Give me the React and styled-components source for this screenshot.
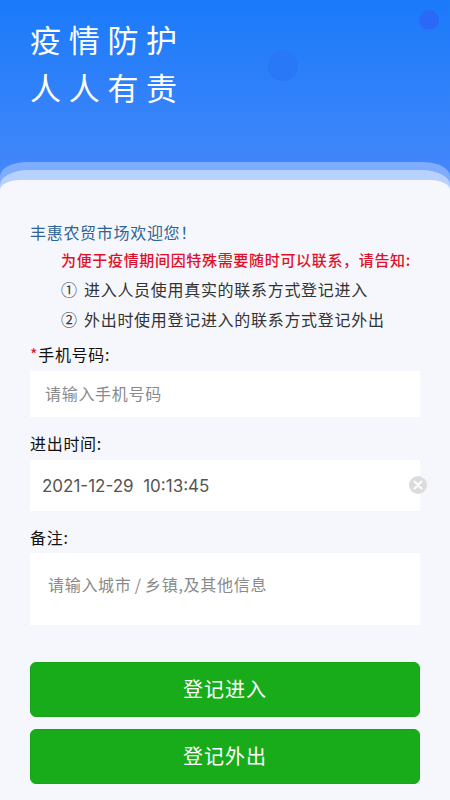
import styled, { createGlobalStyle } from "styled-components";

const GlobalStyle = createGlobalStyle`
  html, body {
    margin: 0;
    padding: 0;
    background-color: #f6f7fc;
  }
  * {
    box-sizing: border-box;
  }
`;

const Page = styled.div`
  width: 450px;
  height: 800px;
  position: relative;
  overflow: hidden;
  display: flex;
  flex-direction: column;
  font-family: "Noto Sans CJK SC", sans-serif;
  background: linear-gradient(180deg, #1a7af9 0, #4a89fb 200px, #4a89fb 100%);
`;

const Dot = styled.div`
  position: absolute;
  left: ${(p) => p.$x}px;
  top: ${(p) => p.$y}px;
  width: ${(p) => p.$size}px;
  height: ${(p) => p.$size}px;
  border-radius: 50%;
  background-color: ${(p) => p.$color};
`;

const Hero = styled.div`
  height: 162px;
  padding: 15px 0 0 30px;
  flex-shrink: 0;
`;

const HeroTitle = styled.div`
  font-size: 31px;
  line-height: 48px;
  letter-spacing: 7.7px;
  color: #ffffff;
`;

const BackSheet = styled.div`
  flex: 1;
  display: flex;
  flex-direction: column;
  padding-top: 8px;
  border-radius: 28px 28px 0 0 / 14px 14px 0 0;
  background-color: #7fadfd;
`;

const MidSheet = styled.div`
  flex: 1;
  display: flex;
  flex-direction: column;
  padding-top: 10px;
  border-radius: 28px 28px 0 0 / 15px 15px 0 0;
  background-color: #b8d1fd;
`;

const Card = styled.div`
  flex: 1;
  padding: 40px 30px 0;
  border-radius: 20px 20px 0 0 / 10px 10px 0 0;
  background-color: #f6f7fc;
`;

const Welcome = styled.div`
  font-size: 16px;
  line-height: 24px;
  letter-spacing: 0.7px;
  color: #2f6496;
`;

const Notice = styled.div`
  margin: 4px 0 0 31px;
  font-size: 15px;
  font-weight: 500;
  line-height: 24px;
  letter-spacing: 0.67px;
  white-space: nowrap;
  color: #e0102a;
`;

const Rule = styled.div`
  margin: ${(p) => p.$top}px 0 0 31px;
  font-size: 16px;
  line-height: 24px;
  letter-spacing: 0.7px;
  word-spacing: 2px;
  color: #333333;
`;

const Label = styled.div`
  margin-top: ${(p) => p.$top}px;
  height: 24px;
  font-size: 16px;
  line-height: 24px;
  letter-spacing: 0.7px;
  color: #111111;
`;

const Required = styled.span`
  color: #e0102a;
`;

const Field = styled.div`
  position: relative;
  margin-top: ${(p) => p.$top}px;
`;

const TextInput = styled.input`
  display: block;
  width: 100%;
  height: ${(p) => p.$height}px;
  padding: 0 0 2px ${(p) => p.$inset}px;
  border: none;
  outline: none;
  background-color: #ffffff;
  font-family: inherit;
  font-size: 16px;
  letter-spacing: 0.7px;
  color: #555555;

  &::placeholder {
    color: #8a8a8a;
    opacity: 1;
  }
`;

const TimeInput = styled(TextInput)`
  padding-bottom: 0;
  font-family: "Inter", sans-serif;
  font-size: 17px;
  letter-spacing: 0;
`;

const NoteInput = styled.textarea`
  display: block;
  width: 100%;
  height: 72px;
  padding: 19px 0 0 18px;
  border: none;
  outline: none;
  resize: none;
  background-color: #ffffff;
  font-family: inherit;
  font-size: 16px;
  line-height: 24px;
  letter-spacing: 0.7px;
  word-spacing: -1px;

  &::placeholder {
    color: #8a8a8a;
    opacity: 1;
  }
`;

const ClearButton = styled.div`
  position: absolute;
  top: 16px;
  right: -7px;
  width: 18px;
  height: 18px;
  display: flex;
  align-items: center;
  justify-content: center;
  border-radius: 50%;
  background-color: #dcdcdc;
`;

const Actions = styled.div`
  margin-top: 37px;
  display: flex;
  flex-direction: column;
  gap: 12px;
`;

const ActionButton = styled.button`
  height: 55px;
  padding: 0 0 2px;
  border: 1px solid #15a518;
  border-radius: 6px;
  background-color: #18ac1a;
  font-family: inherit;
  font-size: 20px;
  letter-spacing: 1px;
  color: #ffffff;
`;

const App = () => {
  return (
    <Page>
      <GlobalStyle />
      <Dot $x={419} $y={10} $size={20} $color="#2a69f7" />
      <Dot $x={268} $y={51} $size={30} $color="#2878f8" />
      <Hero>
        <HeroTitle>疫情防护</HeroTitle>
        <HeroTitle>人人有责</HeroTitle>
      </Hero>
      <BackSheet>
        <MidSheet>
          <Card>
            <Welcome>{"丰惠农贸市场欢迎您\uFF01"}</Welcome>
            <Notice>{"为便于疫情期间因特殊需要随时可以联系\uFF0C请告知:"}</Notice>
            <Rule $top={5}>① 进入人员使用真实的联系方式登记进入</Rule>
            <Rule $top={6}>② 外出时使用登记进入的联系方式登记外出</Rule>
            <Label $top={11}>
              <Required>*</Required>手机号码:
            </Label>
            <Field $top={5}>
              <TextInput $height={46} $inset={15} placeholder="请输入手机号码" />
            </Field>
            <Label $top={14}>进出时间:</Label>
            <Field $top={5}>
              <TimeInput $height={51} $inset={12} defaultValue="2021-12-29  10:13:45" />
              <ClearButton>
                <svg width="10" height="10" viewBox="0 0 10 10">
                  <path
                    d="M1.5 1.5l7 7M8.5 1.5l-7 7"
                    stroke="#ffffff"
                    strokeWidth="1.8"
                    strokeLinecap="round"
                  />
                </svg>
              </ClearButton>
            </Field>
            <Label $top={14}>备注:</Label>
            <Field $top={4}>
              <NoteInput placeholder="请输入城市 / 乡镇,及其他信息" />
            </Field>
            <Actions>
              <ActionButton>登记进入</ActionButton>
              <ActionButton>登记外出</ActionButton>
            </Actions>
          </Card>
        </MidSheet>
      </BackSheet>
    </Page>
  );
};

export default App;
